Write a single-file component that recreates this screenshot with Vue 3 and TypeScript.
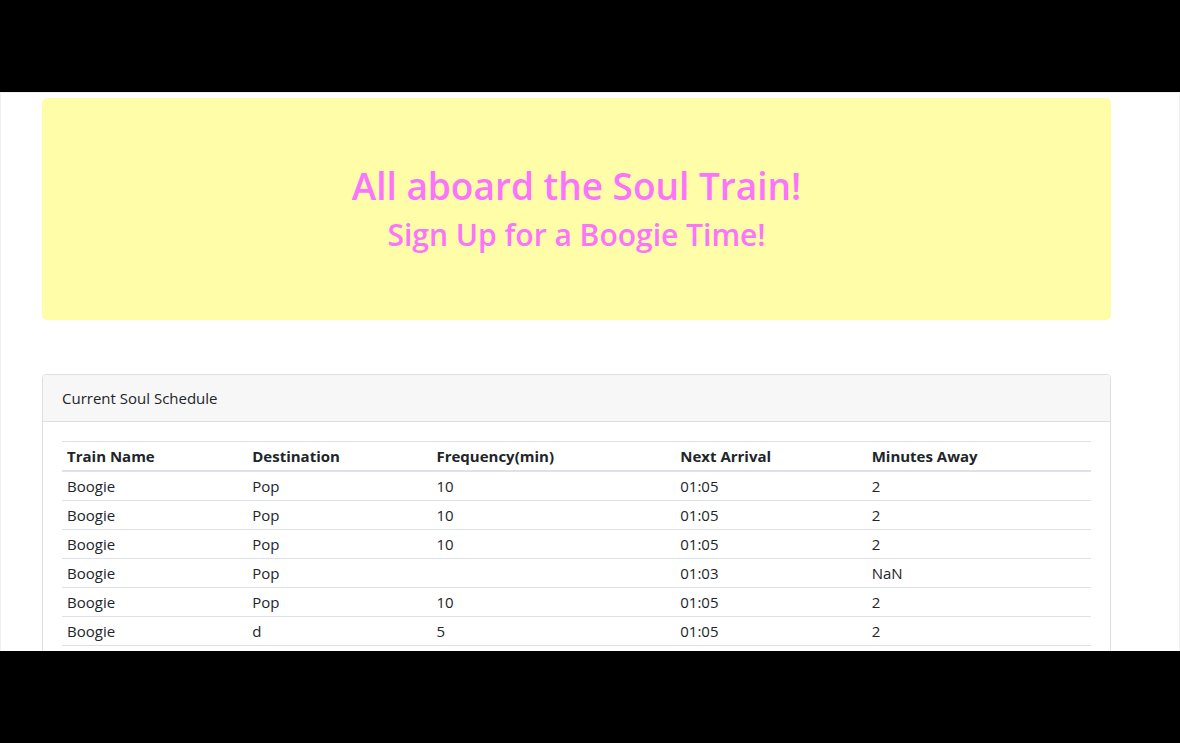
<script setup lang="ts">
interface Train {
  name: string
  destination: string
  frequency: string
  nextArrival: string
  minutesAway: string
}

const trains: Train[] = [
  { name: 'Boogie', destination: 'Pop', frequency: '10', nextArrival: '01:05', minutesAway: '2' },
  { name: 'Boogie', destination: 'Pop', frequency: '10', nextArrival: '01:05', minutesAway: '2' },
  { name: 'Boogie', destination: 'Pop', frequency: '10', nextArrival: '01:05', minutesAway: '2' },
  { name: 'Boogie', destination: 'Pop', frequency: '', nextArrival: '01:03', minutesAway: 'NaN' },
  { name: 'Boogie', destination: 'Pop', frequency: '10', nextArrival: '01:05', minutesAway: '2' },
  { name: 'Boogie', destination: 'd', frequency: '5', nextArrival: '01:05', minutesAway: '2' },
]
</script>

<template>
  <div class="frame">
    <main class="page">
      <header class="jumbotron">
        <h1>All aboard the Soul Train!</h1>
        <h2>Sign Up for a Boogie Time!</h2>
      </header>

      <section class="card" aria-labelledby="schedule-title">
        <div id="schedule-title" class="card-header">Current Soul Schedule</div>
        <div class="card-body">
          <table class="schedule">
            <colgroup>
              <col class="col-name" />
              <col class="col-destination" />
              <col class="col-frequency" />
              <col class="col-arrival" />
              <col />
            </colgroup>
            <thead>
              <tr>
                <th scope="col">Train Name</th>
                <th scope="col">Destination</th>
                <th scope="col">Frequency(min)</th>
                <th scope="col">Next Arrival</th>
                <th scope="col">Minutes Away</th>
              </tr>
            </thead>
            <tbody>
              <tr v-for="(train, index) in trains" :key="index">
                <td>{{ train.name }}</td>
                <td>{{ train.destination }}</td>
                <td>{{ train.frequency }}</td>
                <td>{{ train.nextArrival }}</td>
                <td>{{ train.minutesAway }}</td>
              </tr>
            </tbody>
          </table>
        </div>
      </section>
    </main>
  </div>
</template>

<style>
body {
  margin: 0;
  background: #000;
}
</style>

<style scoped>
.frame {
  box-sizing: border-box;
  display: flex;
  height: 100vh;
  padding: 92px 0;
  background: #000;
  color: #212529;
  font-family: "Open Sans", "Noto Sans", sans-serif;
  font-size: 15px;
  line-height: 20px;
}

.page {
  box-sizing: border-box;
  flex: 1;
  min-width: 0;
  overflow: hidden;
  padding: 5px 68px 0 41px;
  border: 1px solid #f0f0f0;
  border-bottom: 0;
  background: #fff;
}

.jumbotron {
  margin-bottom: 54px;
  padding: 63px 32px;
  border-radius: 5px;
  background: #fffda8;
  color: #fb74fb;
  text-align: center;
}

.jumbotron h1,
.jumbotron h2 {
  margin: 0;
  font-weight: 600;
}

.jumbotron h1 {
  margin-bottom: 2px;
  font-size: 37px;
  line-height: 50px;
}

.jumbotron h2 {
  font-size: 30px;
  line-height: 44px;
}

.card {
  border: 1px solid #dfdfdf;
  border-radius: 4px;
  background: #fff;
}

.card-header {
  padding: 13px 19px;
  border-bottom: 1px solid #dfdfdf;
  border-radius: 3px 3px 0 0;
  background: #f7f7f7;
}

.card-body {
  padding: 19px;
}

.schedule {
  width: 100%;
  table-layout: fixed;
  border-collapse: separate;
  border-spacing: 0;
}

.col-name {
  width: 18%;
}

.col-destination {
  width: 17.9%;
}

.col-frequency {
  width: 23.7%;
}

.col-arrival {
  width: 18.6%;
}

.schedule th,
.schedule td {
  height: 20px;
  padding: 4px 5px;
  border-bottom: 1px solid #dee2e6;
  text-align: left;
}

.schedule th {
  border-top: 1px solid #dee2e6;
  border-bottom-width: 2px;
  font-weight: 700;
}
</style>
